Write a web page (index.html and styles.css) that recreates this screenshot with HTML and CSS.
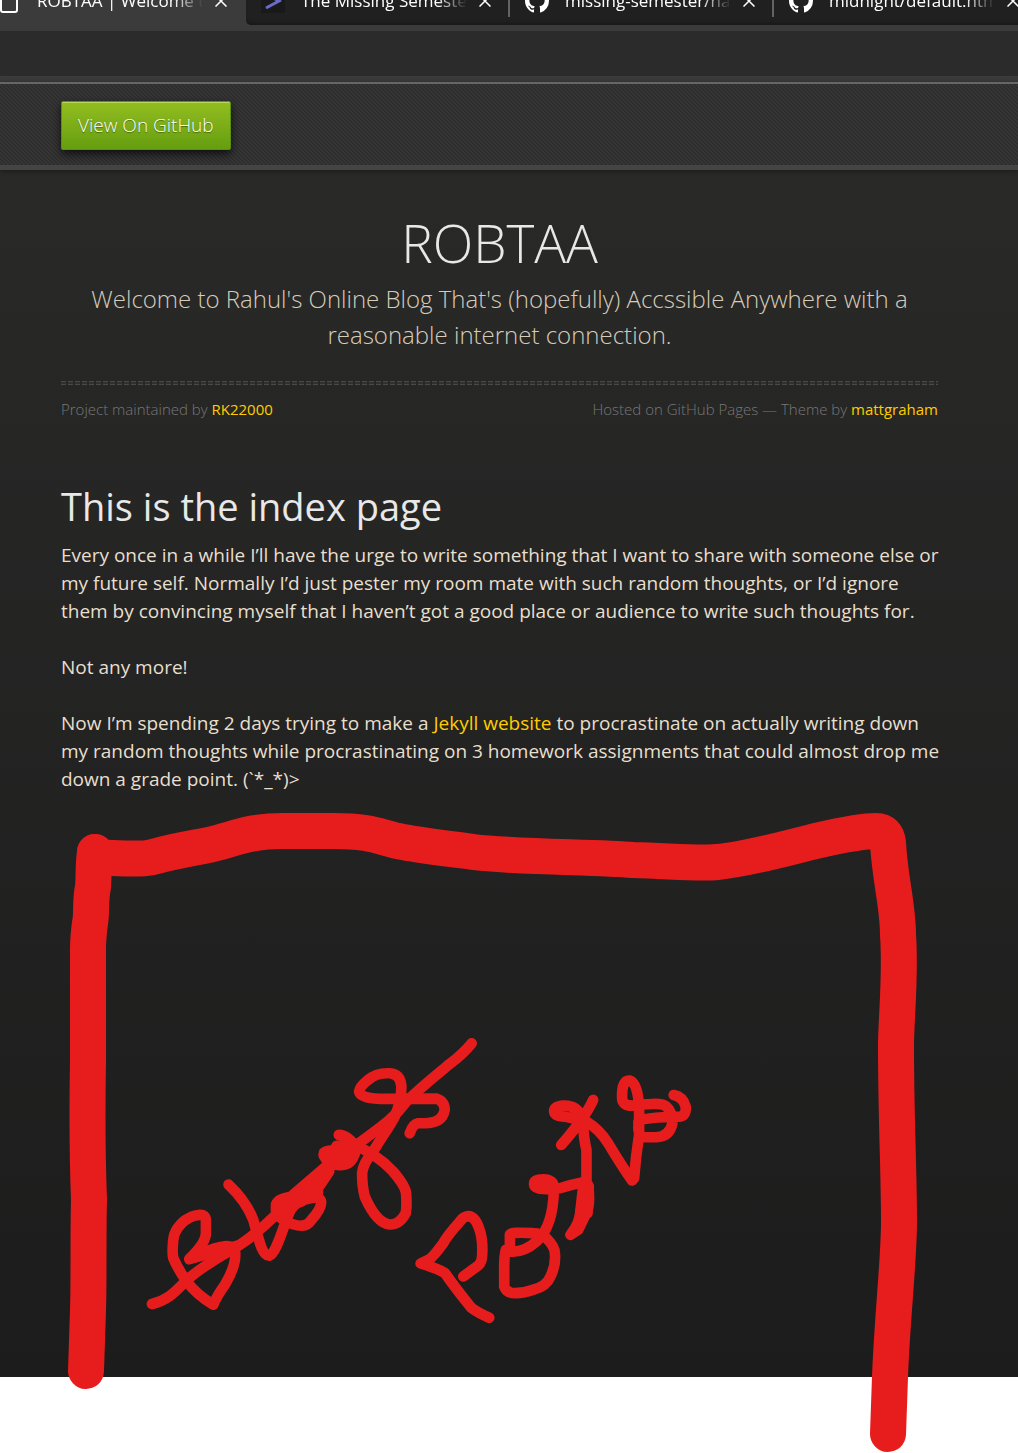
FILE: index.html
```html
<!DOCTYPE html>
<html lang="en">
<head>
<meta charset="utf-8">
<meta name="viewport" content="width=device-width, initial-scale=1">
<title>ROBTAA | Welcome to Rahul's Online Blog</title>
<link rel="stylesheet" href="styles.css">
</head>
<body>
<svg class="defs" aria-hidden="true">
  <symbol id="close" viewBox="0 0 12 12"><path d="M0.500 0.500L11.500 11.500M11.500 0.500L0.500 11.500" fill="none" stroke="#fff" stroke-width="1.500"/></symbol>
  <symbol id="github" viewBox="0 0 16 16"><path fill="#fff" d="M8 0C3.580 0 0 3.580 0 8c0 3.540 2.290 6.530 5.470 7.590.4.070.55-.17.55-.38 0-.19-.01-.82-.01-1.490-2.010.37-2.530-.49-2.690-.94-.09-.23-.48-.94-.82-1.130-.28-.15-.68-.52-.01-.53.63-.01 1.080.58 1.230.82.72 1.210 1.870.87 2.330.66.07-.52.28-.87.51-1.070-1.780-.2-3.640-.89-3.640-3.950 0-.87.31-1.590.82-2.150-.08-.2-.36-1.020.08-2.120 0 0 .67-.21 2.200.82.64-.18 1.320-.27 2-.27s1.360.09 2 .27c1.530-1.040 2.200-.82 2.200-.82.44 1.100.16 1.920.08 2.120.51.56.82 1.270.82 2.150 0 3.070-1.870 3.750-3.650 3.950.29.25.54.73.54 1.480 0 1.070-.01 1.930-.01 2.200 0 .21.15.46.55.38A8.010 8.010 0 0 0 16 8c0-4.420-3.580-8-8-8z"/></symbol>
</svg>

<header class="browser">
  <nav class="tabs" aria-label="Open tabs">
    <div class="tab tab-active">
      <svg class="favicon" viewBox="0 0 24 24"><path d="M4 1H14L20 7V21Q20 23 18 23H6Q4 23 4 21Z" fill="none" stroke="#fff" stroke-width="2"/></svg>
      <span class="tab-title">ROBTAA | Welcome to Rahul's</span>
      <button class="tab-close" type="button" aria-label="Close tab"><svg><use href="#close"/></svg></button>
    </div>
    <div class="tab tab-next">
      <svg class="favicon" viewBox="0 0 24 24"><path d="M0 0H24V24H0Z" fill="#191919"/><path d="M5 5L18 12L5 19" fill="none" stroke="#6a6ac8" stroke-width="3"/></svg>
      <span class="tab-title">The Missing Semester of</span>
      <button class="tab-close" type="button" aria-label="Close tab"><svg><use href="#close"/></svg></button>
    </div>
    <div class="tab tab-divided">
      <svg class="favicon"><use href="#github"/></svg>
      <span class="tab-title">missing-semester/nav.html</span>
      <button class="tab-close" type="button" aria-label="Close tab"><svg><use href="#close"/></svg></button>
    </div>
    <div class="tab tab-divided">
      <svg class="favicon"><use href="#github"/></svg>
      <span class="tab-title">midnight/default.html at</span>
      <button class="tab-close" type="button" aria-label="Close tab"><svg><use href="#close"/></svg></button>
    </div>
  </nav>
  <div class="toolbar"></div>
</header>

<div class="page">
  <div class="topbar"><a class="button" href="#">View On GitHub</a></div>
  <main class="content">
    <section class="title">
      <h1>ROBTAA</h1>
      <p class="tagline">Welcome to Rahul's Online Blog That's (hopefully) Accssible Anywhere with a reasonable internet connection.</p>
      <hr class="rule">
      <div class="credits">
        <span>Project maintained by <a href="#">RK22000</a></span>
        <span>Hosted on GitHub Pages — Theme by <a href="#">mattgraham</a></span>
      </div>
    </section>
    <article class="post">
      <h2>This is the index page</h2>
      <p>Every once in a while I’ll have the urge to write something that I want to share with someone else or my future self. Normally I’d just pester my room mate with such random thoughts, or I’d ignore them by convincing myself that I haven’t got a good place or audience to write such thoughts for.</p>
      <p>Not any more!</p>
      <p>Now I’m spending 2 days trying to make a <a href="#">Jekyll website</a> to procrastinate on actually writing down my random thoughts while procrastinating on 3 homework assignments that could almost drop me down a grade point. (`*_*)&gt;</p>
    </article>
    <svg class="sketch" viewBox="61 813 877 640" role="img" aria-label="Blog posts">
      <g class="frame">
        <path d="M95 852C93 866 94 875 93 887C90 900 92 915 90 923Q88 938 88 950V1060C87 1120 87 1150 89 1200C88 1240 89 1280 88 1310L86 1371"/>
        <path d="M95 852Q100 858 112 858C160 860 147 857 173 852C197 847 200 847 213 844C237 838 250 831 283 831H333C375 831 380 838 403 842C430 847 460 850 473 852C510 857 600 857 633 860C670 861 700 864 717 862C750 859 790 847 820 840Q860 831 876 831Q887 831 888 843C890 880 898 905 898 935C901 975 896 1020 896 1045C896 1120 899 1170 899 1222C899 1260 892 1320 890 1377L888 1434"/>
      </g>
      <g class="scribble" transform="translate(130 1020) scale(.333)">
        <path d="M66 853C120 840 140 810 170 782C220 735 290 700 330 675C400 630 440 580 490 535C580 460 620 415 690 368C740 330 790 300 830 245C870 205 920 165 960 132Q1000 102 1026 70"/>
        <path d="M178 718Q228 670 228 640V600Q226 585 210 585C165 587 132 630 130 660Q126 700 130 715Q145 750 170 785Q200 825 250 855Q260 830 285 795Q318 740 316 700Q312 675 280 680Q250 683 178 718L320 678"/>
        <path d="M296 494Q350 545 370 600C385 650 395 708 418 708C440 700 460 620 478 580Q490 550 515 545"/>
        <path d="M565 518Q520 528 490 530Q440 535 438 558Q435 585 460 600Q490 618 515 618Q535 617 545 600Q574 568 574 548Q573 533 555 533Q520 538 490 553"/>
        <path class="solid" d="M490 525L600 430L598 455L565 505Z"/>
        <path d="M627 345Q655 345 680 385Q670 430 645 434Q620 440 597 425Q578 410 582 400Q585 390 620 392L660 375L620 378L598 428M645 398L670 398L610 425"/>
        <path d="M660 370Q740 400 790 455Q828 500 829 520Q832 560 828 580Q810 615 780 614Q740 610 705 530Q697 500 697 460Q700 430 730 395C760 345 780 320 795 290Q815 245 815 200Q812 162 780 160Q740 158 715 180Q690 200 688 215Q690 237 770 237L920 236Q945 245 945 270Q938 310 885 310H865Q850 312 840 340"/>
      </g>
      <g class="scribble" transform="translate(400 1060) scale(.333)">
        <path d="M190 650L235 617Q247 607 247 580C250 520 230 470 205 469Q190 470 180 485Q140 530 130 550Q95 598 85 600L62 611Q110 625 135 640Q170 690 215 745Q235 760 268 774"/>
        <path d="M318 570Q312 590 313 640V680Q320 700 345 700Q375 700 400 690Q440 680 452 650Q469 615 465 580Q465 560 440 535Q425 520 400 520Q330 516 330 525V575Q370 580 410 545Q460 500 462 390Q465 358 430 358Q400 358 403 375Q405 388 440 388L480 385Q510 375 550 367L565 375Q573 440 558 463L535 510L512 525Q540 490 543 450L556 380"/>
        <path class="solid" d="M550 380L567 380L563 460L540 470Z"/>
        <path d="M560 370V270Q552 240 550 190M484 255Q555 175 580 120M545 170Q530 135 490 137Q462 140 463 155Q465 170 495 170L560 185Q600 210 625 250Q670 325 697 362L703 355Q708 290 718 225V150Q716 70 690 62Q665 60 667 115Q668 138 700 137Q725 133 760 132Q790 131 800 140Q818 155 818 190Q810 230 770 232H730M716 210V185Q730 172 840 170Q860 168 858 140Q850 110 822 105"/>
      </g>
    </svg>
  </main>
</div>
</body>
</html>
```
FILE: styles.css
```css
* { box-sizing: border-box; }

body {
  margin: 0;
  padding-bottom: 76px;
  background: #fff;
  font-family: "Open Sans", "Noto Sans", sans-serif;
}

.defs { position: absolute; width: 0; height: 0; }

a { color: #ffcc00; text-decoration: none; }

/* Browser chrome */
.browser { background: #3b3b3b; overflow: hidden; }

.tabs {
  display: flex;
  align-items: flex-end;
  height: 25px;
  margin-left: -20px;
}

.tab {
  display: flex;
  align-items: center;
  flex: 0 0 264px;
  height: 48px;
  padding-left: 17px;
  background: #202020;
  box-shadow: inset 0 -4px 4px -3px #151515;
}

.tab-active { flex-basis: 266px; background: #3b3b3b; box-shadow: none; }

.tab-next {
  flex-basis: 262px;
  padding-left: 15px;
  border-bottom-left-radius: 5px;
}

.tab-divided {
  background: linear-gradient(#666, #666) 0 0 / 2px 40px no-repeat #202020;
}

.favicon { width: 24px; height: 24px; flex: none; }

.tab-title {
  width: 166px;
  margin: 0 12px 0 16px;
  overflow: hidden;
  white-space: nowrap;
  color: #fff;
  font: 17px/26px "Open Sans", sans-serif;
  -webkit-mask-image: linear-gradient(90deg, #000 136px, transparent 166px);
  mask-image: linear-gradient(90deg, #000 136px, transparent 166px);
}

.tab-close {
  flex: none;
  width: 12px;
  height: 12px;
  padding: 0;
  border: 0;
  background: none;
}

.tab-close svg { display: block; width: 12px; height: 12px; }

.toolbar {
  height: 57px;
  border: solid #3b3b3b;
  border-width: 6px 0;
  background: #2b2b2b;
}

/* Page */
.page { background: linear-gradient(#2a2a29, #1c1c1c); }

.topbar {
  padding: 17px 61px 15px;
  border-top: 2px solid #666;
  border-bottom: 5px solid #444;
  background: linear-gradient(45deg, #2d2d2d 25%, #363636 25% 50%, #2d2d2d 50% 75%, #363636 75%) 0 0 / 4px 4px;
  box-shadow: 0 1px 5px rgba(0, 0, 0, 0.4);
}

.button {
  display: inline-block;
  vertical-align: top;
  padding: 0 16px;
  border: 1px solid #5c9110;
  border-radius: 2px;
  background: linear-gradient(#93bd20, #659e10);
  box-shadow: inset 0 1px 0 #b5d75a, 0 4px 8px rgba(0, 0, 0, 0.7);
  color: #fff;
  font-size: 19px;
  font-weight: 300;
  line-height: 47px;
  text-shadow: 0 1px 1px rgba(0, 0, 0, 0.4);
}

.content { display: flow-root; padding: 35px 80px 0 61px; }

.title { text-align: center; }

h1 {
  margin: 0;
  color: #e8e8e8;
  font-size: 53px;
  font-weight: 300;
  line-height: 76px;
}

.tagline {
  margin: 0;
  color: #d6ccba;
  font-size: 24px;
  font-weight: 300;
  line-height: 36px;
}

.rule {
  height: 4px;
  margin: 28px 0 12px;
  border: 0;
  background:
    repeating-linear-gradient(90deg, transparent 0 5px, #272727 5px 7px),
    linear-gradient(#4a4a4a 1px, #303030 1px 3px, #4a4a4a 3px);
}

.credits {
  display: flex;
  justify-content: space-between;
  color: #777;
  font-size: 15px;
  font-weight: 300;
  line-height: 24px;
}

.credits a { font-weight: 400; }

/* Text may run a little past the rule above it */
.post { margin: 60px -6px 0 0; }

h2 {
  margin: 0 0 10px;
  color: #e8e8e8;
  font-size: 38px;
  font-weight: 400;
  line-height: 50px;
}

.post p {
  margin: 0 0 28px;
  color: #e8dfcd;
  font-size: 19px;
  line-height: 28px;
}

/* The drawing hangs over the end of the page */
.sketch {
  display: block;
  width: 100%;
  margin-top: -8px;
  margin-bottom: -76px;
  overflow: visible;
}

.sketch path {
  fill: none;
  stroke: #e71d1d;
  stroke-linecap: round;
  stroke-linejoin: round;
}

.frame path { stroke-width: 36px; }
.scribble path { stroke-width: 32px; }
.sketch .solid { fill: #e71d1d; }
```
